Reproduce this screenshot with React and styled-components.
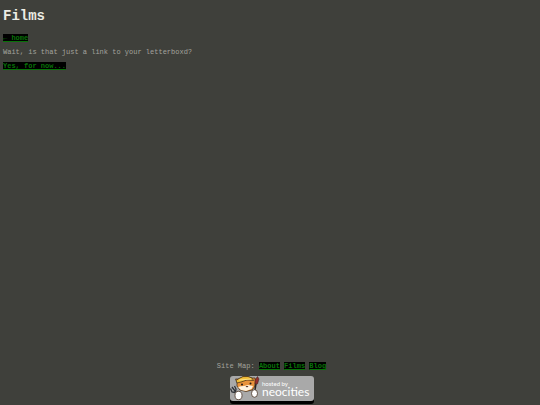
import React from "react";
import styled, { createGlobalStyle } from "styled-components";

const GlobalStyle = createGlobalStyle`
  body {
    margin: 0;
    background: #3f403b;
    color: #a3a39d;
    font: 7px/8px "Liberation Mono", "Courier New", monospace;
  }
`;

const Page = styled.div`
  box-sizing: border-box;
  min-height: 100vh;
  display: flex;
  flex-direction: column;
  justify-content: space-between;
  padding: 8px 0 1px 3px;
`;

const Content = styled.main`
  display: flex;
  flex-direction: column;
  align-items: flex-start;
  gap: 6px;
`;

const Title = styled.h1`
  margin: 0 0 4px;
  color: #ecece4;
  font-size: 14px;
  line-height: 16px;
`;

const Text = styled.p`
  margin: 0;
`;

const Link = styled.a`
  background: #000;
  color: #087208;
  font-weight: 700;
  text-decoration: underline;
`;

const Footer = styled.footer`
  display: flex;
  flex-direction: column;
  align-items: center;
  gap: 6px;
`;

const HostLink = styled.a`
  display: block;
`;

const Badge = styled.svg`
  display: block;
  width: 86px;
  height: 28px;
`;

function HostBadge() {
  return (
    <Badge viewBox="0 0 86 28" role="img" aria-label="Hosted by Neocities">
      <rect x="1" y="3" width="84" height="25" rx="3" fill="#000" />
      <rect x="1" y="0" width="84" height="25" rx="3" fill="#a9a9a9" />
      <g stroke="#3a2818" strokeWidth="0.7" strokeLinejoin="round">
        <path d="M8 6 6.5 3 10 3 14 .6 19 .5 23 2 26 2 26.5 5 25.5 11 23 14 17 15.5 11 14 8 10Z" fill="#e8923a" />
        <path d="M7 4.5 10 2.5 14 .6 19 .5 23 2 24.5 4.5 18 4 12 6 8 7Z" fill="#f0bd38" />
      </g>
      <path d="m10 4 12-1" stroke="#fbe184" strokeWidth="1" />
      <path d="M9 11q3-1 6-1l4-1 5 1-1.5 3-5.5 2-5-1Z" fill="#fff3df" />
      <circle cx="13" cy="8.5" r="1" fill="#201915" />
      <circle cx="21.5" cy="7.5" r="1" fill="#201915" />
      <path d="M16.5 10h3L18 11.5Z" fill="#49251b" />
      <path d="m3 11 6 8M1.5 12.5l1.5 3.5 3 .5M5.5 10l1.5 3-.5 3" fill="none" stroke="#303338" strokeWidth="1.3" />
      <path d="m25.5 17 1.5-9" fill="none" stroke="#292320" strokeWidth="1.5" />
      <path d="M26 8V4l2.5-3.5L30 3l-1.5 5Z" fill="#942f2b" stroke="#35201c" strokeWidth="0.5" />
      <ellipse cx="9.5" cy="19.5" rx="3.5" ry="4.2" fill="#fff" stroke="#4a3325" strokeWidth="0.8" />
      <ellipse cx="25.5" cy="17.5" rx="3" ry="3.8" fill="#fff" stroke="#4a3325" strokeWidth="0.8" />
      <g fill="#fff" fontFamily="Lato, sans-serif">
        <text x="33" y="10" fontSize="6">hosted by</text>
        <text x="33" y="20" fontSize="12">neocities</text>
      </g>
    </Badge>
  );
}

export default function App() {
  return (
    <>
      <GlobalStyle />
      <Page>
        <Content>
          <Title>Films</Title>
          <Link href="#home">← home</Link>
          <Text>Wait, is that just a link to your letterboxd?</Text>
          <Link href="#letterboxd">Yes, for now...</Link>
        </Content>
        <Footer>
          <Text>
            Site Map: <Link href="#about">About</Link> <Link href="#films">Films</Link>{" "}
            <Link href="#blog">Blog</Link>
          </Text>
          <HostLink href="#neocities">
            <HostBadge />
          </HostLink>
        </Footer>
      </Page>
    </>
  );
}
